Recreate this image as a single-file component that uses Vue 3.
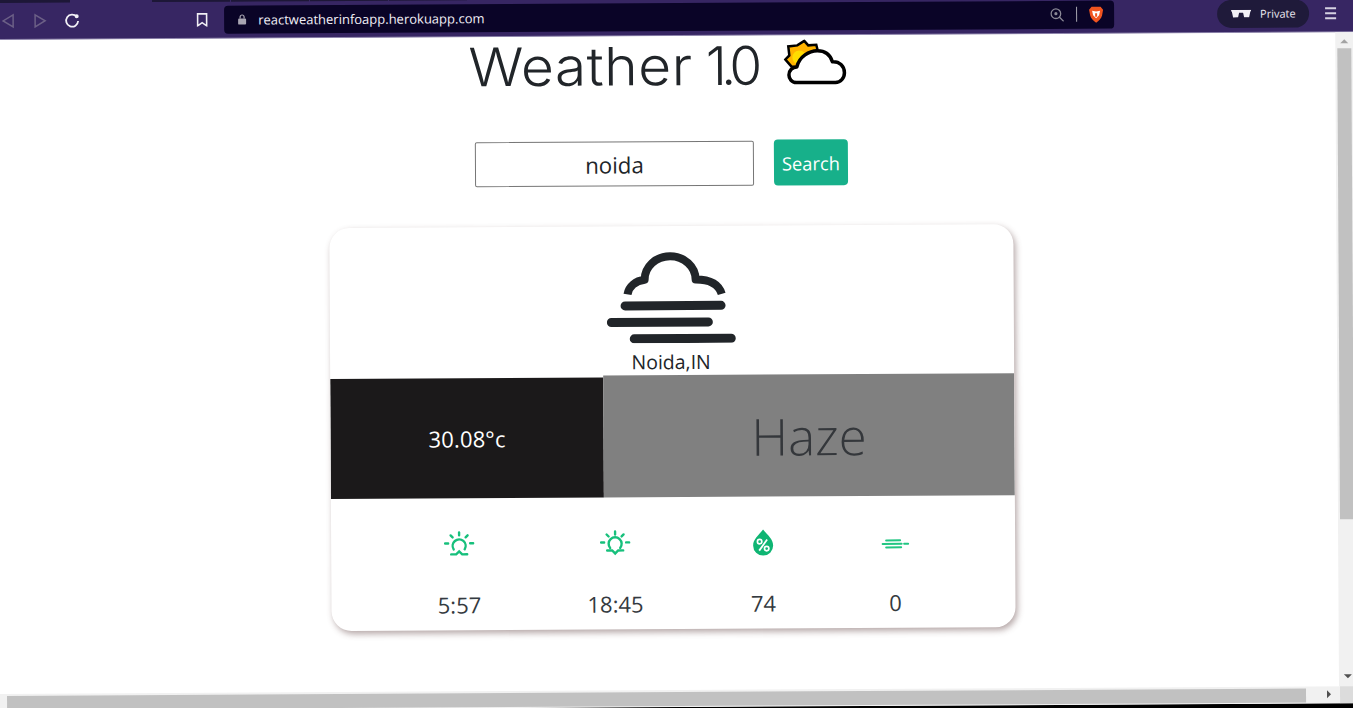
<script setup>
const stats = [
  { id: 'rise', value: '5:57', cls: 's1' },
  { id: 'set', value: '18:45', cls: 's2' },
  { id: 'hum', value: '74', cls: 's3' },
  { id: 'wind', value: '0', cls: 's4' }
]
</script>

<template>
  <div class="window">
    <header class="chrome">
      <div class="tabs">
        <span class="tab t0"></span><span class="gap0"></span>
        <span class="tab"></span><span class="tab"></span><span class="tab"></span><span class="tab"></span>
      </div>
      <div class="toolbar">
        <svg class="ic back" viewBox="0 0 14 16" width="14" height="16"><path d="M12 2 2 8l10 6z" fill="none" stroke="#6b5f86" stroke-width="1.5"/></svg>
        <svg class="ic fwd" viewBox="0 0 14 16" width="14" height="16"><path d="M2 2l10 6-10 6z" fill="none" stroke="#6b5f86" stroke-width="1.5"/></svg>
        <svg class="ic reload" viewBox="0 0 16 16" width="16" height="16"><path d="M12.6 4.2A6 6 0 1 0 14 8.5" fill="none" stroke="#f2f0f6" stroke-width="1.8"/><circle cx="12.6" cy="3.8" r="2" fill="#f2f0f6"/></svg>
        <svg class="ic mark" viewBox="0 0 12 14" width="12" height="14"><path d="M1.5 1h9v12L6 9.8 1.5 13z" fill="none" stroke="#f0eef4" stroke-width="1.6"/></svg>
        <div class="url">
          <svg viewBox="0 0 10 12" width="10" height="12"><rect x="1" y="5" width="8" height="6" rx="1" fill="#a9a6b3"/><path d="M3 5V3.4a2 2 0 0 1 4 0V5" fill="none" stroke="#a9a6b3" stroke-width="1.2"/></svg>
          <span class="addr">reactweatherinfoapp.herokuapp.com</span>
          <svg class="zoomi" viewBox="0 0 14 14" width="14" height="14"><circle cx="5.8" cy="5.8" r="4.8" fill="none" stroke="#8b8996" stroke-width="1.3"/><circle cx="5.8" cy="5.8" r="1.6" fill="#8b8996"/><path d="M9.2 9.2 13.500 13.500" stroke="#8b8996" stroke-width="1.4"/></svg>
          <span class="sep"></span>
          <svg viewBox="0 0 16 18" width="16" height="18"><path d="M3.500 1h9l2.500 3-1 5.500c-.6 3.300-3.500 5.700-6 7.500-2.500-1.800-5.400-4.200-6-7.500L1 4z" fill="#f1541f"/><path d="M4 5l4 .8L12 5l-1 4.500L8 12.500 5 9.500z" fill="#fff"/><path d="M7 7.500h2v3.500H7z" fill="#f1541f"/></svg>
        </div>
        <div class="private">
          <svg viewBox="0 0 20 8" width="20" height="8"><path d="M0 0h20v1.500h-.7L18 7.500h-5L12 3H8L7 7.500H2L.7 1.500H0z" fill="#f2f0f6"/></svg>
          <span>Private</span>
        </div>
        <div class="burger"><i></i><i></i><i></i></div>
      </div>
    </header>

    <div class="viewport">
      <main class="page">
        <div class="title-row">
          <h1><span class="word">Weather</span> <span class="num">1.0</span></h1>
          <svg class="logo" viewBox="0 0 64 48" width="64" height="48">
            <path d="M21 1.500 25 6l8-.5 1 4-9 18L8 27l-6-7 4-4-1-9 9-1z" fill="#ffb300" stroke="#000" stroke-width="2.500" stroke-linejoin="miter"/>
            <circle cx="16" cy="18" r="7" fill="#ffdc00"/>
            <path d="M13 43.200C8 43.200 5.500 39 5.500 35.500 5.500 31 9 27.500 13.500 27.500 16 17 26 11.500 34 11.500 42 11.500 47 16 49 22.500 56 22 61 27 61 33.500 61 39 57 43.200 52 43.200z" fill="#fff" stroke="#000" stroke-width="3.500" stroke-linejoin="round"/>
          </svg>
        </div>

        <form class="search" @submit.prevent>
          <input class="field" value="noida" />
          <button class="btn" type="button">Search</button>
        </form>

        <section class="card">
          <div class="head">
            <svg class="fog" viewBox="0 0 130 92" width="130" height="92">
              <path d="M20.800 43C22 35 29 29.500 38 28.500A25.500 23.500 0 0 1 89 28.500C102 28.500 112 33 115 43" fill="none" stroke="#212529" stroke-width="8" stroke-linejoin="round"/>
              <path d="M18.300 54.500h96M4.500 71h97M27.300 87.500h97" stroke="#212529" stroke-width="9" stroke-linecap="round"/>
            </svg>
            <div class="city">Noida,IN</div>
          </div>
          <div class="band">
            <div class="temp">30.08°c</div>
            <div class="cond">Haze</div>
          </div>
          <div class="stats">
            <div v-for="s in stats" :key="s.id" class="stat" :class="s.cls">
              <svg v-if="s.id === 'rise'" class="si" viewBox="0 0 32 32" width="32" height="32">
                <g fill="none" stroke="#17c07c" stroke-width="2.400" stroke-linecap="round">
                  <path d="M16 5v3M7.500 8l2 2M24.500 8l-2 2M2 16h3M27 16h3"/>
                  <path d="M10.500 22a6.500 6.500 0 1 1 11 0"/>
                  <path d="M8 27h5l3-3 3 3h5"/>
                </g>
              </svg>
              <svg v-else-if="s.id === 'set'" class="si" viewBox="0 0 32 32" width="32" height="32">
                <g fill="none" stroke="#17c07c" stroke-width="2.400" stroke-linecap="round">
                  <path d="M16 5v3M7.500 8l2 2M24.500 8l-2 2M2 16h3M27 16h3"/>
                  <path d="M11 21.500a6.500 6.500 0 1 1 10 0"/>
                  <path d="M8 24h5l3 3 3-3h5"/>
                </g>
              </svg>
              <svg v-else-if="s.id === 'hum'" class="si" viewBox="0 0 32 32" width="32" height="32">
                <path d="M16 4c5 6 10 10 10 16a10 10 0 0 1-20 0C6 14 11 10 16 4z" fill="#0fb573"/>
                <circle cx="12.500" cy="16" r="2.200" fill="none" stroke="#fff" stroke-width="1.700"/>
                <circle cx="19.500" cy="23" r="2.200" fill="none" stroke="#fff" stroke-width="1.700"/>
                <path d="M20 14 12 25" stroke="#fff" stroke-width="1.800"/>
              </svg>
              <svg v-else class="si" viewBox="0 0 32 32" width="32" height="32">
                <g stroke="#22c683" stroke-width="2" stroke-linecap="round">
                  <path d="M7 15.500h14M3.500 19h19M25 19h4M7 22.500h15"/>
                </g>
              </svg>
              <div class="val">{{ s.value }}</div>
            </div>
          </div>
        </section>
      </main>

      <div class="vbar">
        <span class="up"></span>
        <span class="thumb"></span>
        <span class="down"></span>
      </div>
    </div>

    <div class="hbar">
      <span class="hthumb"></span>
      <span class="right"></span>
      <span class="corner"></span>
    </div>
  </div>
</template>

<style>
html, body { margin: 0; overflow: hidden; background: #000; }
</style>

<style scoped>
/* The reference photo of the browser is tilted by a third of a degree. */
.window {
  width: 1362px;
  height: 711px;
  margin-left: -8px;
  transform: rotate(-0.33deg);
  transform-origin: 8px 0;
  display: flex;
  flex-direction: column;
  overflow: hidden;
  font-family: "Open Sans", "Liberation Sans", sans-serif;
  color: #212529;
  background: #fff;
}
.chrome {
  flex: 0 0 40px;
  height: 40px;
  background: #372663;
  box-sizing: border-box;
  padding-left: 8px;
  border-bottom: 1px solid #8f86ad;
}
.tabs { display: flex; height: 3px; }
.tab { width: 78px; margin-right: 1px; background: #1d1737; }
.t0 { width: 70px; }
.gap0 { width: 81px; }
.toolbar {
  height: 35px;
  display: flex;
  align-items: center;
  padding-left: 1px;
}
.ic { flex: none; }
.fwd { margin-left: 18px; }
.reload { margin-left: 17px; }
.mark { margin-left: 116px; }
.url {
  margin-left: 16px;
  width: 890px;
  height: 28px;
  flex: none;
  background: #0a0427;
  border-radius: 4px;
  display: flex;
  align-items: center;
  box-sizing: border-box;
  padding: 0 10px 0 13px;
}
.addr {
  margin-left: 11px;
  font: 13px "Open Sans", sans-serif;
  color: #f3f1f8;
  flex: 1;
}
.zoomi { margin-right: 12px; }
.sep { width: 1px; height: 15px; background: #a7a5b0; margin-right: 11px; }
.private {
  margin-left: 103px;
  width: 92px;
  height: 28px;
  flex: none;
  box-sizing: border-box;
  padding-left: 14px;
  border-radius: 14px;
  background: #1f1a3a;
  color: #eceaf2;
  font: 11px "Open Sans", sans-serif;
  display: flex;
  align-items: center;
  gap: 9px;
}
.burger {
  margin-left: 16px;
  width: 11px;
  flex: none;
  display: flex;
  flex-direction: column;
  gap: 3px;
}
.burger i { display: block; height: 2px; background: #d6d2e2; }

.viewport {
  flex: 0 0 654px;
  height: 654px;
  display: flex;
  background: #fff;
  box-sizing: border-box;
  padding-left: 8px;
}
.page {
  flex: 0 0 1335px;
  width: 1335px;
  display: flex;
  flex-direction: column;
  align-items: flex-start;
}
.title-row {
  height: 55px;
  flex: none;
  display: flex;
  align-items: flex-start;
  padding-left: 468px;
}
h1 {
  margin: 3px 0 0;
  width: 292px;
  flex: none;
  font-family: "Inter", "Noto Sans", sans-serif;
  font-weight: 300;
  font-size: 53px;
  line-height: 55px;
  color: #212529;
  white-space: nowrap;
  word-spacing: -16px;
}
.word {
  display: inline-block;
  letter-spacing: 0.4px;
  transform: scaleX(1.075);
  transform-origin: left center;
  margin-right: 29px;
}
.num { letter-spacing: -5.5px; }
.logo { margin-left: 23px; margin-top: 4px; flex: none; }
.search {
  margin-top: 49px;
  margin-left: 474px;
  display: flex;
  align-items: center;
  gap: 20px;
}
.field {
  width: 279px;
  height: 45px;
  box-sizing: border-box;
  border: 1px solid #767676;
  border-radius: 2px;
  text-align: center;
  font: 22.300px "Open Sans", sans-serif;
  color: #212529;
  padding: 2px 0 0;
  background: #fff;
  outline: none;
}
.btn {
  width: 74px;
  height: 46px;
  border: 0;
  border-radius: 4px;
  background: #17b08a;
  color: #fff;
  font: 18.300px "Open Sans", sans-serif;
  padding: 0;
}
.card {
  margin-top: 40px;
  margin-left: 328px;
  width: 684px;
  height: 403px;
  flex: none;
  background: #fff;
  border-radius: 20px;
  box-shadow: 2px 3px 6px rgba(90, 60, 60, 0.45);
  display: flex;
  flex-direction: column;
  overflow: hidden;
}
.head {
  height: 149px;
  flex: none;
  display: flex;
  flex-direction: column;
  align-items: center;
  box-sizing: border-box;
  padding-top: 25px;
}
.fog { flex: none; }
.city { font-size: 19.500px; line-height: 24px; margin-top: 7px; margin-left: -2px; }
.band { display: flex; align-items: flex-end; height: 122px; flex: none; }
.temp {
  width: 273px;
  height: 120px;
  box-sizing: border-box;
  padding-bottom: 1px;
  background: #1b191a;
  color: #fff;
  font-size: 22px;
  letter-spacing: 0.15px;
  display: flex;
  align-items: center;
  justify-content: center;
  flex: none;
}
.cond {
  flex: 1;
  height: 122px;
  background: #808080;
  color: #34373b;
  font-weight: 300;
  font-size: 51px;
  display: flex;
  align-items: center;
  justify-content: center;
}
.stats { flex: 1; display: flex; }
.stat {
  flex: none;
  width: 80px;
  display: flex;
  flex-direction: column;
  align-items: center;
}
.s1 { margin-left: 88px; }
.s2 { margin-left: 76px; }
.s3 { margin-left: 68px; }
.s4 { margin-left: 52px; }
.si { margin-top: 29px; flex: none; }
.val { font-size: 22px; line-height: 30px; margin-top: 30px; color: #343a40; }
.vbar {
  flex: none;
  width: 19px;
  box-sizing: border-box;
  padding-right: 2px;
  background: #f1f1f1;
  display: flex;
  flex-direction: column;
  align-items: center;
}
.up, .down {
  width: 0;
  height: 0;
  border-left: 4px solid transparent;
  border-right: 4px solid transparent;
  flex: none;
}
.up { border-bottom: 4px solid #a3a3a3; margin-top: 7px; }
.thumb { width: 14px; height: 471px; background: #c1c1c1; margin-top: 5px; flex: none; }
.down { border-top: 4px solid #505050; margin-top: auto; margin-bottom: 8px; }
.hbar {
  flex: 0 0 17px;
  height: 17px;
  background: #f1f1f1;
  display: flex;
  align-items: flex-start;
  box-sizing: border-box;
  padding-left: 11px;
}
.hthumb { width: 1299px; height: 14px; background: #c1c1c1; margin-top: 2px; flex: none; }
.right {
  margin-left: 21px;
  margin-top: 4px;
  flex: none;
  width: 0;
  height: 0;
  border-top: 4px solid transparent;
  border-bottom: 4px solid transparent;
  border-left: 4px solid #505050;
}
.corner { margin-left: 9px; flex: 1; align-self: stretch; background: #dcdcdc; }
</style>
